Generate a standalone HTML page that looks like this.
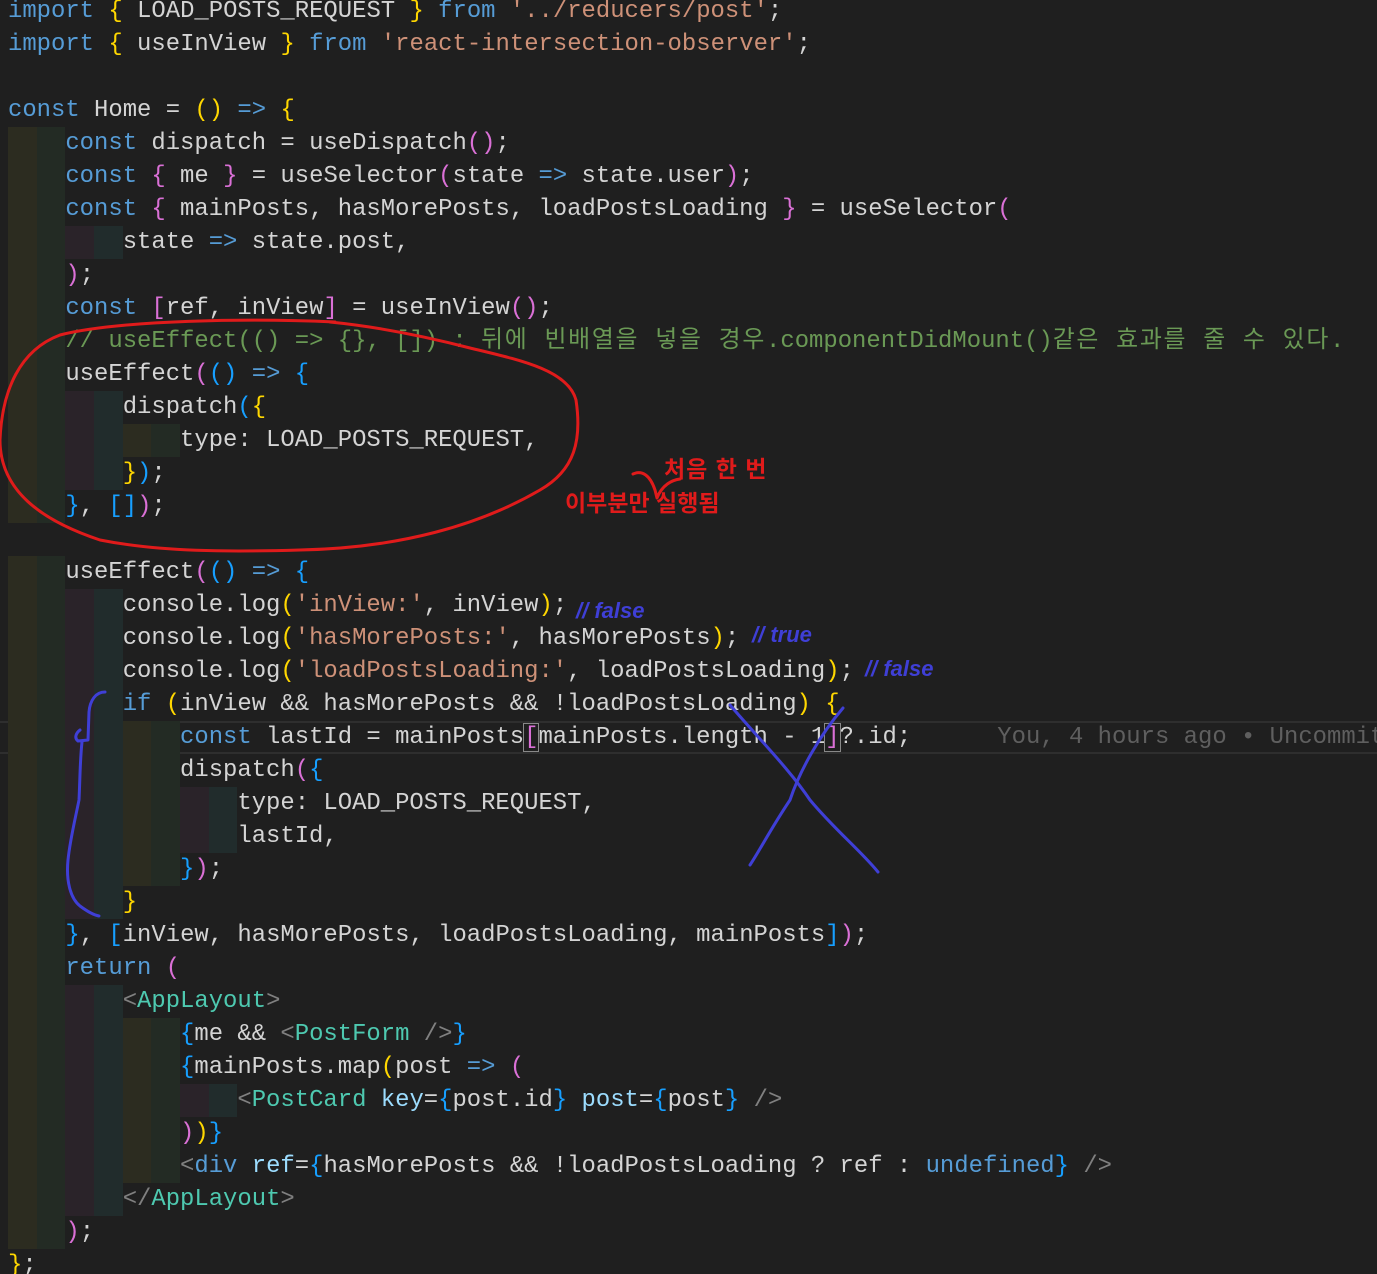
<!DOCTYPE html>
<html><head><meta charset="utf-8">
<style>
html,body{margin:0;padding:0;background:#1f1f1f;width:1377px;height:1274px;overflow:hidden;position:relative}
#code{position:absolute;left:0;top:-5px;width:1377px;font-family:"Liberation Mono","Noto Sans CJK KR",monospace;font-size:23.9px;color:#d4d4d4}
.l{height:33px;line-height:33px;white-space:pre;overflow:hidden;padding-left:8px;width:1369px}
.i{display:inline-block;width:2ch;height:33px;vertical-align:top}
.a1{background:#2c2c20}.a2{background:#232b24}.a3{background:#2a2329}.a4{background:#212c2c}
.k{color:#569cd6}.s{color:#ce9178}.y{color:#ffd700}.p{color:#da70d6}.b{color:#179fff}
.c{color:#6a9955}.t{color:#4ec9b0}.g{color:#808080}.at{color:#9cdcfe}.gh{color:#5f5f5f}
.ko{letter-spacing:1.7px}
.cur{box-shadow:inset 0 2px 0 #2e2e2e,inset 0 -2px 0 #2e2e2e}
svg{position:absolute;left:0;top:0}
.ann{position:absolute;font-family:"Liberation Sans","Noto Sans CJK KR",sans-serif;font-weight:bold;white-space:nowrap}
</style></head><body>
<div id="code"><div class="l"><span class="k">import</span> <span class="y">{</span> LOAD_POSTS_REQUEST <span class="y">}</span> <span class="k">from</span> <span class="s">'../reducers/post'</span>;</div><div class="l"><span class="k">import</span> <span class="y">{</span> useInView <span class="y">}</span> <span class="k">from</span> <span class="s">'react-intersection-observer'</span>;</div><div class="l"> </div><div class="l"><span class="k">const</span> Home = <span class="y">()</span> <span class="k">=&gt;</span> <span class="y">{</span></div><div class="l"><span class="i a1"></span><span class="i a2"></span><span class="k">const</span> dispatch = useDispatch<span class="p">()</span>;</div><div class="l"><span class="i a1"></span><span class="i a2"></span><span class="k">const</span> <span class="p">{</span> me <span class="p">}</span> = useSelector<span class="p">(</span>state <span class="k">=&gt;</span> state.user<span class="p">)</span>;</div><div class="l"><span class="i a1"></span><span class="i a2"></span><span class="k">const</span> <span class="p">{</span> mainPosts, hasMorePosts, loadPostsLoading <span class="p">}</span> = useSelector<span class="p">(</span></div><div class="l"><span class="i a1"></span><span class="i a2"></span><span class="i a3"></span><span class="i a4"></span>state <span class="k">=&gt;</span> state.post,</div><div class="l"><span class="i a1"></span><span class="i a2"></span><span class="p">)</span>;</div><div class="l"><span class="i a1"></span><span class="i a2"></span><span class="k">const</span> <span class="p">[</span>ref, inView<span class="p">]</span> = useInView<span class="p">()</span>;</div><div class="l"><span class="i a1"></span><span class="i a2"></span><span class="c">// useEffect(() =&gt; {}, []) : <span class="ko">뒤에 빈배열을 넣을 경우</span>.componentDidMount()<span class="ko">같은 효과를 줄 수 있다</span>.</span></div><div class="l"><span class="i a1"></span><span class="i a2"></span>useEffect<span class="p">(</span><span class="b">()</span> <span class="k">=&gt;</span> <span class="b">{</span></div><div class="l"><span class="i a1"></span><span class="i a2"></span><span class="i a3"></span><span class="i a4"></span>dispatch<span class="b">(</span><span class="y">{</span></div><div class="l"><span class="i a1"></span><span class="i a2"></span><span class="i a3"></span><span class="i a4"></span><span class="i a1"></span><span class="i a2"></span>type: LOAD_POSTS_REQUEST,</div><div class="l"><span class="i a1"></span><span class="i a2"></span><span class="i a3"></span><span class="i a4"></span><span class="y">}</span><span class="b">)</span>;</div><div class="l"><span class="i a1"></span><span class="i a2"></span><span class="b">}</span>, <span class="b">[]</span><span class="p">)</span>;</div><div class="l"> </div><div class="l"><span class="i a1"></span><span class="i a2"></span>useEffect<span class="p">(</span><span class="b">()</span> <span class="k">=&gt;</span> <span class="b">{</span></div><div class="l"><span class="i a1"></span><span class="i a2"></span><span class="i a3"></span><span class="i a4"></span>console.log<span class="y">(</span><span class="s">'inView:'</span>, inView<span class="y">)</span>;</div><div class="l"><span class="i a1"></span><span class="i a2"></span><span class="i a3"></span><span class="i a4"></span>console.log<span class="y">(</span><span class="s">'hasMorePosts:'</span>, hasMorePosts<span class="y">)</span>;</div><div class="l"><span class="i a1"></span><span class="i a2"></span><span class="i a3"></span><span class="i a4"></span>console.log<span class="y">(</span><span class="s">'loadPostsLoading:'</span>, loadPostsLoading<span class="y">)</span>;</div><div class="l"><span class="i a1"></span><span class="i a2"></span><span class="i a3"></span><span class="i a4"></span><span class="k">if</span> <span class="y">(</span>inView &amp;&amp; hasMorePosts &amp;&amp; !loadPostsLoading<span class="y">)</span> <span class="y">{</span></div><div class="l cur"><span class="i a1"></span><span class="i a2"></span><span class="i a3"></span><span class="i a4"></span><span class="i a1"></span><span class="i a2"></span><span class="k">const</span> lastId = mainPosts<span class="p" style="outline:1px solid #888">[</span>mainPosts.length - 1<span class="p" style="outline:1px solid #888">]</span>?.id;      <span class="gh">You, 4 hours ago • Uncommitted changes</span></div><div class="l"><span class="i a1"></span><span class="i a2"></span><span class="i a3"></span><span class="i a4"></span><span class="i a1"></span><span class="i a2"></span>dispatch<span class="p">(</span><span class="b">{</span></div><div class="l"><span class="i a1"></span><span class="i a2"></span><span class="i a3"></span><span class="i a4"></span><span class="i a1"></span><span class="i a2"></span><span class="i a3"></span><span class="i a4"></span>type: LOAD_POSTS_REQUEST,</div><div class="l"><span class="i a1"></span><span class="i a2"></span><span class="i a3"></span><span class="i a4"></span><span class="i a1"></span><span class="i a2"></span><span class="i a3"></span><span class="i a4"></span>lastId,</div><div class="l"><span class="i a1"></span><span class="i a2"></span><span class="i a3"></span><span class="i a4"></span><span class="i a1"></span><span class="i a2"></span><span class="b">}</span><span class="p">)</span>;</div><div class="l"><span class="i a1"></span><span class="i a2"></span><span class="i a3"></span><span class="i a4"></span><span class="y">}</span></div><div class="l"><span class="i a1"></span><span class="i a2"></span><span class="b">}</span>, <span class="b">[</span>inView, hasMorePosts, loadPostsLoading, mainPosts<span class="b">]</span><span class="p">)</span>;</div><div class="l"><span class="i a1"></span><span class="i a2"></span><span class="k">return</span> <span class="p">(</span></div><div class="l"><span class="i a1"></span><span class="i a2"></span><span class="i a3"></span><span class="i a4"></span><span class="g">&lt;</span><span class="t">AppLayout</span><span class="g">&gt;</span></div><div class="l"><span class="i a1"></span><span class="i a2"></span><span class="i a3"></span><span class="i a4"></span><span class="i a1"></span><span class="i a2"></span><span class="b">{</span>me &amp;&amp; <span class="g">&lt;</span><span class="t">PostForm</span> <span class="g">/&gt;</span><span class="b">}</span></div><div class="l"><span class="i a1"></span><span class="i a2"></span><span class="i a3"></span><span class="i a4"></span><span class="i a1"></span><span class="i a2"></span><span class="b">{</span>mainPosts.map<span class="y">(</span>post <span class="k">=&gt;</span> <span class="p">(</span></div><div class="l"><span class="i a1"></span><span class="i a2"></span><span class="i a3"></span><span class="i a4"></span><span class="i a1"></span><span class="i a2"></span><span class="i a3"></span><span class="i a4"></span><span class="g">&lt;</span><span class="t">PostCard</span> <span class="at">key</span>=<span class="b">{</span>post.id<span class="b">}</span> <span class="at">post</span>=<span class="b">{</span>post<span class="b">}</span> <span class="g">/&gt;</span></div><div class="l"><span class="i a1"></span><span class="i a2"></span><span class="i a3"></span><span class="i a4"></span><span class="i a1"></span><span class="i a2"></span><span class="p">)</span><span class="y">)</span><span class="b">}</span></div><div class="l"><span class="i a1"></span><span class="i a2"></span><span class="i a3"></span><span class="i a4"></span><span class="i a1"></span><span class="i a2"></span><span class="g">&lt;</span><span class="k">div</span> <span class="at">ref</span>=<span class="b">{</span>hasMorePosts &amp;&amp; !loadPostsLoading ? ref : <span class="k">undefined</span><span class="b">}</span> <span class="g">/&gt;</span></div><div class="l"><span class="i a1"></span><span class="i a2"></span><span class="i a3"></span><span class="i a4"></span><span class="g">&lt;/</span><span class="t">AppLayout</span><span class="g">&gt;</span></div><div class="l"><span class="i a1"></span><span class="i a2"></span><span class="p">)</span>;</div><div class="l"><span class="y">}</span>;</div></div>

<svg width="1377" height="1274" fill="none" stroke-linecap="round" stroke-linejoin="round">
<path d="M335 322 C250 318 120 320 60 335 C20 350 2 390 0 440 C0 490 40 520 100 540 C160 552 230 552 300 550 C400 548 480 525 540 490 C575 470 582 440 576 400 C568 370 520 360 470 348 C420 335 370 326 330 322" stroke="#e01b1b" stroke-width="3"/>
<path d="M633 474 C642 470 650 475 655 490 L657 498 C662 485 672 480 680 479" stroke="#e01b1b" stroke-width="3"/>
<g stroke="#3f3fd6" stroke-width="3">
<path d="M105 692 C96 692 90 700 89 712 L88 740 L78 741 C74 738 76 733 80 730 M82 742 C80 760 80 780 79 800 C75 820 70 840 68 860 C66 880 70 898 80 906 C88 912 94 915 99 916"/>
<path d="M730 705 C760 740 790 770 810 800 C835 830 860 850 878 872"/>
<path d="M843 708 C820 735 800 770 790 800 C770 830 760 850 750 865"/>
</g>
</svg>
<div class="ann" style="left:664px;top:450px;font-size:23px;color:#e01b1b;letter-spacing:1px">처음 한 번</div>
<div class="ann" style="left:565px;top:484px;font-size:23px;color:#e01b1b">이부분만 실행됨</div>
<div class="ann" style="left:576px;top:598px;font-size:22px;color:#3f3fd6;font-style:italic">// false</div>
<div class="ann" style="left:752px;top:622px;font-size:22px;color:#3f3fd6;font-style:italic">// true</div>
<div class="ann" style="left:865px;top:656px;font-size:22px;color:#3f3fd6;font-style:italic">// false</div>
</body></html>
